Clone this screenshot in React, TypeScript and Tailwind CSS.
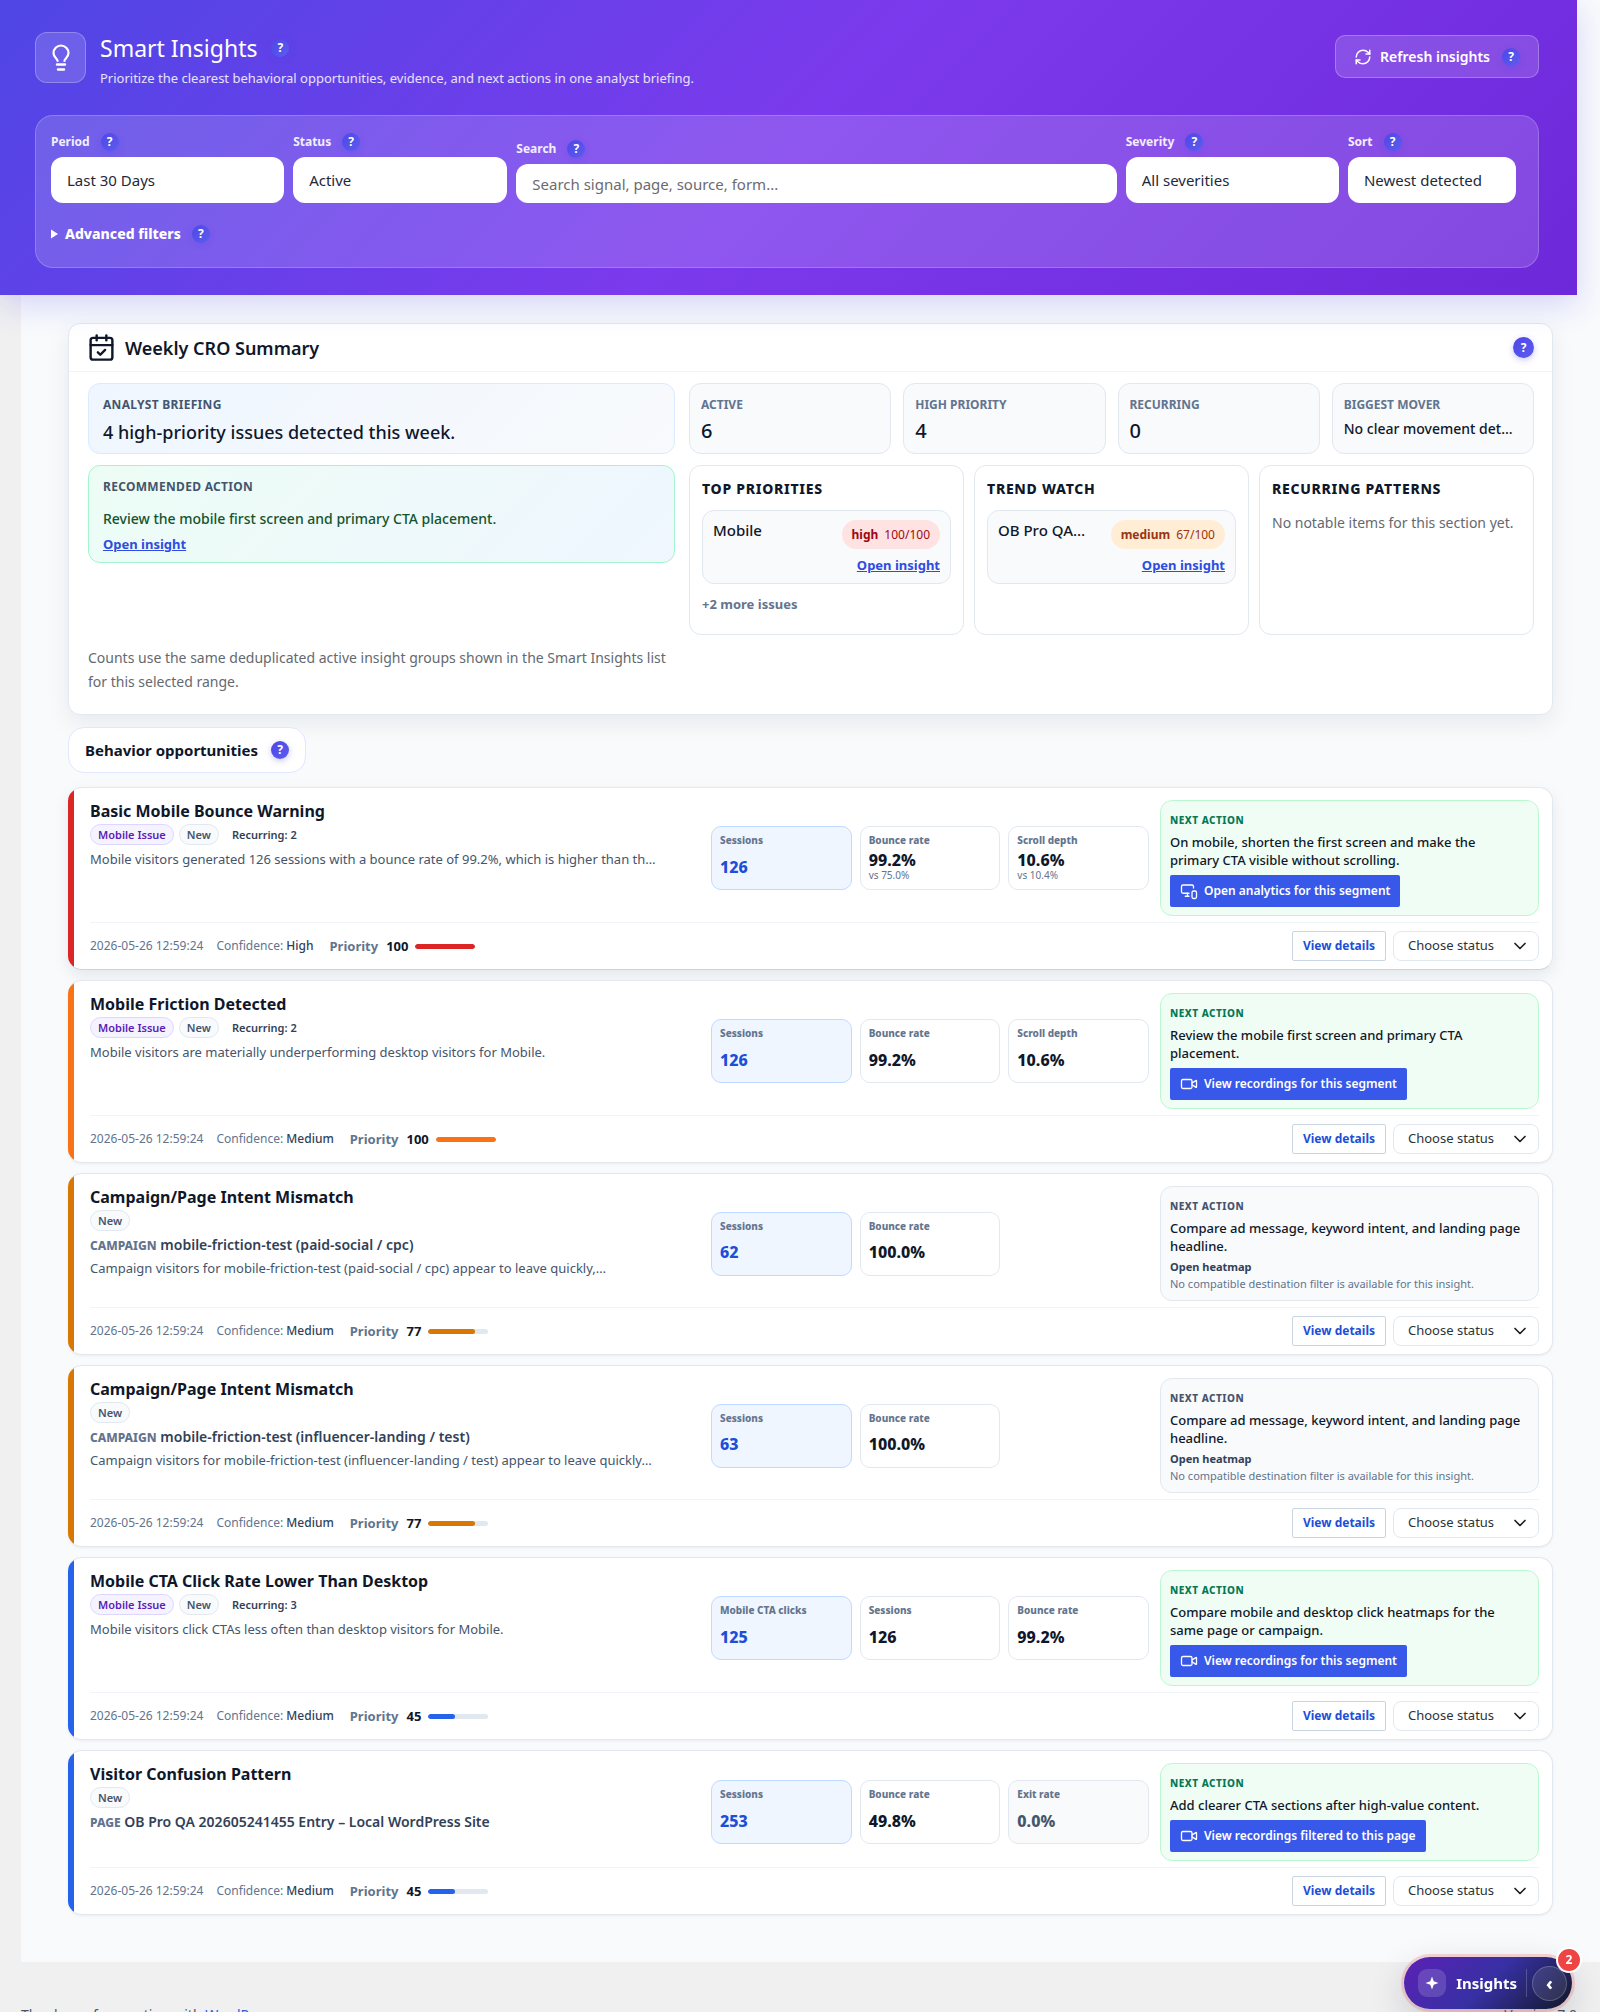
import React from 'react';
import { CalendarCheck, ChevronDown, MonitorSmartphone, RefreshCw, Video } from 'lucide-react';

interface Metric {
  label: string;
  value: string;
  note?: string;
  muted?: boolean;
}

interface Insight {
  title: string;
  mobile?: boolean;
  recurring?: number;
  scope?: [string, string];
  description?: string;
  metrics: Metric[];
  action: string;
  button?: string;
  analytics?: boolean;
  confidence: string;
  priority: number;
  color: string;
}

const insights: Insight[] = [
  {
    title: 'Basic Mobile Bounce Warning',
    mobile: true,
    recurring: 2,
    description: 'Mobile visitors generated 126 sessions with a bounce rate of 99.2%, which is higher than th…',
    metrics: [
      { label: 'Sessions', value: '126' },
      { label: 'Bounce rate', value: '99.2%', note: 'vs 75.0%' },
      { label: 'Scroll depth', value: '10.6%', note: 'vs 10.4%' },
    ],
    action: 'On mobile, shorten the first screen and make the primary CTA visible without scrolling.',
    button: 'Open analytics for this segment',
    analytics: true,
    confidence: 'High',
    priority: 100,
    color: 'bg-[#dc2626]',
  },
  {
    title: 'Mobile Friction Detected',
    mobile: true,
    recurring: 2,
    description: 'Mobile visitors are materially underperforming desktop visitors for Mobile.',
    metrics: [
      { label: 'Sessions', value: '126' },
      { label: 'Bounce rate', value: '99.2%' },
      { label: 'Scroll depth', value: '10.6%' },
    ],
    action: 'Review the mobile first screen and primary CTA placement.',
    button: 'View recordings for this segment',
    confidence: 'Medium',
    priority: 100,
    color: 'bg-[#f97316]',
  },
  {
    title: 'Campaign/Page Intent Mismatch',
    scope: ['CAMPAIGN', 'mobile-friction-test (paid-social / cpc)'],
    description: 'Campaign visitors for mobile-friction-test (paid-social / cpc) appear to leave quickly,…',
    metrics: [
      { label: 'Sessions', value: '62' },
      { label: 'Bounce rate', value: '100.0%' },
    ],
    action: 'Compare ad message, keyword intent, and landing page headline.',
    confidence: 'Medium',
    priority: 77,
    color: 'bg-[#d97706]',
  },
  {
    title: 'Campaign/Page Intent Mismatch',
    scope: ['CAMPAIGN', 'mobile-friction-test (influencer-landing / test)'],
    description: 'Campaign visitors for mobile-friction-test (influencer-landing / test) appear to leave quickly…',
    metrics: [
      { label: 'Sessions', value: '63' },
      { label: 'Bounce rate', value: '100.0%' },
    ],
    action: 'Compare ad message, keyword intent, and landing page headline.',
    confidence: 'Medium',
    priority: 77,
    color: 'bg-[#d97706]',
  },
  {
    title: 'Mobile CTA Click Rate Lower Than Desktop',
    mobile: true,
    recurring: 3,
    description: 'Mobile visitors click CTAs less often than desktop visitors for Mobile.',
    metrics: [
      { label: 'Mobile CTA clicks', value: '125' },
      { label: 'Sessions', value: '126' },
      { label: 'Bounce rate', value: '99.2%' },
    ],
    action: 'Compare mobile and desktop click heatmaps for the same page or campaign.',
    button: 'View recordings for this segment',
    confidence: 'Medium',
    priority: 45,
    color: 'bg-[#2563eb]',
  },
  {
    title: 'Visitor Confusion Pattern',
    scope: ['PAGE', 'OB Pro QA 202605241455 Entry – Local WordPress Site'],
    metrics: [
      { label: 'Sessions', value: '253' },
      { label: 'Bounce rate', value: '49.8%' },
      { label: 'Exit rate', value: '0.0%', muted: true },
    ],
    action: 'Add clearer CTA sections after high-value content.',
    button: 'View recordings filtered to this page',
    confidence: 'Medium',
    priority: 45,
    color: 'bg-[#2563eb]',
  },
];

const Help = ({ large = false }: { large?: boolean }) => (
  <span
    className={`inline-flex shrink-0 items-center justify-center rounded-full bg-linear-to-br from-[#4f46e5] to-[#5b5cf0] text-xs font-bold text-white shadow-[0_2px_6px_rgba(79,70,229,0.3)] ${
      large ? 'size-[21px]' : 'size-[18px]'
    }`}
  >
    ?
  </span>
);

const BulbIcon = () => (
  <svg width="28" height="28" viewBox="0 0 28 28" fill="none" stroke="white" strokeWidth="2.2" strokeLinecap="round">
    <path d="M10.6 17c0-2.600-4.100-3.500-4.100-8a7.500 7.500 0 0 1 15 0c0 4.500-4.100 5.400-4.100 8" />
    <path d="M10 20.500h8M11 25.500h6" strokeWidth="2.400" />
  </svg>
);

const FilterSelect = ({ id, label, value }: { id: string; label: string; value: string }) => (
  <div className="min-w-0">
    <div className="mb-1.5 flex items-center gap-[11px]">
      <label htmlFor={id} className="text-xs/[18px] font-bold text-white/90">{label}</label>
      <Help />
    </div>
    <select id={id} className="block h-[46px] w-full appearance-none rounded-xl bg-white px-4 text-[15px] text-[#1e293b]">
      <option>{value}</option>
    </select>
  </div>
);

const Header = () => (
  <header className="relative z-10 bg-linear-[135deg,#4f46e5_0%,#7c3aed_50%,#6d28d9_100%] pt-8 pr-[38px] pb-[27px] pl-[35px] shadow-[0_10px_30px_rgba(79,70,229,0.2)]">
    <div className="flex h-[58px] items-start justify-between">
      <div className="flex gap-3.5">
        <div className="flex size-[51px] items-center justify-center rounded-xl border border-white/25 bg-white/15">
          <BulbIcon />
        </div>
        <div>
          <div className="flex items-center gap-3.5">
            <h1 className="text-[23px]/[32px] text-white">Smart Insights</h1>
            <Help />
          </div>
          <p className="mt-1 text-[13px]/[20px] text-white/85">
            Prioritize the clearest behavioral opportunities, evidence, and next actions in one analyst briefing.
          </p>
        </div>
      </div>
      <button className="mt-[3px] flex h-[43px] items-center rounded-[10px] border border-white/25 bg-white/15 px-[18px] text-sm font-semibold text-white">
        <RefreshCw size={18} className="mr-2" />
        <span className="mr-3">Refresh insights</span>
        <Help />
      </button>
    </div>

    <form className="mt-[25px] rounded-[18px] border border-white/20 bg-white/15 pt-[17px] pr-[22px] pb-[24px] pl-[15px]">
      <div className="grid grid-cols-[233fr_214fr_600fr_213fr_168fr] items-end gap-[9px]">
        <FilterSelect id="period" label="Period" value="Last 30 Days" />
        <FilterSelect id="status" label="Status" value="Active" />
        <div className="min-w-0">
          <div className="mb-1.5 flex items-center gap-[11px]">
            <label htmlFor="search" className="text-xs/[18px] font-bold text-white/90">Search</label>
            <Help />
          </div>
          <input
            id="search"
            type="text"
            placeholder="Search signal, page, source, form..."
            className="block h-[39px] w-full rounded-xl bg-white px-4 text-[15px] text-[#1e293b] placeholder:text-[#6b6b70]"
          />
        </div>
        <FilterSelect id="severity" label="Severity" value="All severities" />
        <FilterSelect id="sort" label="Sort" value="Newest detected" />
      </div>
      <details className="mt-[22px]">
        <summary className="flex list-none items-center text-sm/[18px] font-extrabold text-white">
          <svg width="7" height="10" viewBox="0 0 7 10" fill="currentColor" className="mr-[7px]">
            <path d="M0 0.500 7 5 0 9.500z" />
          </svg>
          <span className="mr-[11px]">Advanced filters</span>
          <Help />
        </summary>
      </details>
    </form>
  </header>
);

const Stat = ({ label, value, text = false }: { label: string; value: string; text?: boolean }) => (
  <div className="min-w-0 rounded-xl border border-slate-200 bg-slate-50 px-[11px] pt-[13px]">
    <p className="text-xs/[16px] font-bold text-slate-500 uppercase">{label}</p>
    <p className={`truncate font-medium text-[#0f172a] ${text ? 'mt-1.5 text-sm/[20px]' : 'mt-1 text-xl/[28px]'}`}>{value}</p>
  </div>
);

const WatchItem = ({ name, level, score, badge }: { name: string; level: string; score: string; badge: string }) => (
  <div className="mt-[11px] rounded-xl border border-slate-200 bg-slate-50 px-2.5 py-[9px]">
    <div className="flex justify-between">
      <span className="text-[15px]/[20px] font-medium text-[#0f172a]">{name}</span>
      <span className={`flex h-[29px] items-center gap-1.5 rounded-full px-2.5 text-xs ${badge}`}>
        <strong className="font-bold">{level}</strong>
        {score}
      </span>
    </div>
    <div className="mt-[7px] text-right text-[13px]/[18px]">
      <a href="#" className="font-bold text-[#2f4ce0] underline">Open insight</a>
    </div>
  </div>
);

const WatchList = ({ title, children }: { title: string; children: React.ReactNode }) => (
  <div className="min-w-0 rounded-xl border border-slate-200 bg-white px-3 pt-[13px] pb-[21px]">
    <h3 className="text-sm/[20px] font-extrabold tracking-wider whitespace-nowrap text-[#0f172a]">{title}</h3>
    {children}
  </div>
);

const WeeklySummary = () => (
  <section className="rounded-xl border border-slate-200 bg-white shadow-[0_8px_24px_rgba(15,23,42,0.07)]">
    <div className="flex h-12 items-center border-b border-slate-100 px-[18px]">
      <CalendarCheck size={29} className="text-[#0f172a]" />
      <h2 className="ml-[9px] text-lg font-semibold text-[#0f172a]">Weekly CRO Summary</h2>
      <span className="ml-auto flex">
        <Help large />
      </span>
    </div>
    <div className="grid grid-cols-[587fr_845fr] gap-x-3.5 gap-y-[11px] pt-[11px] pr-[18px] pb-5 pl-[19px]">
      <div className="rounded-xl border border-blue-100 bg-linear-[135deg,#eff6ff,#f8fafc] px-3.5 pt-[13px] pb-[9px]">
        <p className="text-xs/[16px] font-bold tracking-wide text-slate-600">ANALYST BRIEFING</p>
        <p className="mt-[7px] text-lg/[24px] font-medium text-[#0f172a]">4 high-priority issues detected this week.</p>
      </div>
      <div className="grid grid-cols-4 gap-3">
        <Stat label="Active" value="6" />
        <Stat label="High priority" value="4" />
        <Stat label="Recurring" value="0" />
        <Stat label="Biggest mover" value="No clear movement det…" text />
      </div>
      <div className="self-start rounded-xl border border-emerald-200 bg-linear-[135deg,#ecfdf5,#eff6ff] px-3.5 pt-[13px] pb-[9px]">
        <p className="text-xs/[16px] font-bold tracking-wide text-slate-600">RECOMMENDED ACTION</p>
        <p className="mt-3.5 text-sm/[20px] font-medium text-[#14532d]">Review the mobile first screen and primary CTA placement.</p>
        <p className="mt-1.5 text-[13px]/[18px]">
          <a href="#" className="font-bold text-[#2f4ce0] underline">Open insight</a>
        </p>
      </div>
      <div className="grid grid-cols-3 gap-2.5">
        <WatchList title="TOP PRIORITIES">
          <WatchItem name="Mobile" level="high" score="100/100" badge="bg-red-100 text-red-800" />
          <p className="mt-[11px] text-[13px]/[18px] font-bold text-slate-500">+2 more issues</p>
        </WatchList>
        <WatchList title="TREND WATCH">
          <WatchItem name="OB Pro QA…" level="medium" score="67/100" badge="bg-[#ffedd5] text-[#9a3412]" />
        </WatchList>
        <WatchList title="RECURRING PATTERNS">
          <p className="mt-3.5 text-sm/[20px] whitespace-nowrap text-[#646970]">No notable items for this section yet.</p>
        </WatchList>
      </div>
      <p className="text-sm/[24px] text-[#646970]">
        Counts use the same deduplicated active insight groups shown in the Smart Insights list for this selected range.
      </p>
    </div>
  </section>
);

const MetricBox = ({ metric, primary }: { metric: Metric; primary: boolean }) => {
  const box = primary
    ? 'border-blue-200 bg-[#eff6ff]'
    : metric.muted
      ? 'border-slate-200 bg-slate-50'
      : 'border-slate-200 bg-white';
  const value = primary ? 'text-[#1d4ed8]' : metric.muted ? 'text-slate-600' : 'text-[#0f172a]';

  return (
    <div className={`flex h-16 flex-col rounded-[10px] border px-2 pt-1.5 pb-[3px] ${box}`}>
      <span className="text-[10px]/[14px] font-extrabold whitespace-nowrap text-slate-500">{metric.label}</span>
      <span className="flex flex-1 flex-col justify-center">
        <strong className={`text-base/[18px] font-extrabold ${value}`}>{metric.value}</strong>
        {metric.note && <span className="text-[10px]/[13px] text-slate-500">{metric.note}</span>}
      </span>
    </div>
  );
};

const InsightCard = ({ insight, index }: { insight: Insight; index: number }) => {
  const ButtonIcon = insight.analytics ? MonitorSmartphone : Video;

  return (
    <article
      className={`flex overflow-hidden rounded-[14px] border border-l-0 bg-white ${
        index === 0
          ? 'border-slate-200 border-b-slate-300 shadow-[0_6px_16px_rgba(15,23,42,0.08)]'
          : 'border-slate-200 shadow-[0_1px_3px_rgba(15,23,42,0.06)]'
      }`}
    >
      <div className={`w-[6px] shrink-0 ${insight.color}`}></div>
      <div className="min-w-0 flex-1 pt-3 pr-[13px] pb-2 pl-4">
        <div className="grid grid-cols-[610fr_438fr_379fr] gap-[11px]">
          <div className="min-w-0">
            <h3 className="text-base/[22px] font-bold text-[#0f172a]">{insight.title}</h3>
            <div className="mt-0.5 flex h-[21px] items-center gap-[5px] text-[11px]/[19px] font-semibold">
              {insight.mobile && (
                <span className="rounded-full border border-violet-200 bg-violet-50 px-[7px] text-[#5b21b6]">Mobile Issue</span>
              )}
              <span className="rounded-full border border-slate-200 bg-slate-50 px-[7px] text-slate-600">New</span>
              {insight.recurring && <span className="ml-2 text-slate-700">Recurring: {insight.recurring}</span>}
            </div>
            <div className="mt-1 flex flex-col gap-0.5">
              {insight.scope && (
                <p className="text-sm/[20px] font-semibold text-slate-700">
                  <span className="text-xs/[20px] font-extrabold text-slate-500">{insight.scope[0]}</span> {insight.scope[1]}
                </p>
              )}
              {insight.description && <p className="truncate text-[13px]/[20px] text-slate-600">{insight.description}</p>}
            </div>
          </div>

          <div className="grid grid-cols-3 items-center gap-2">
            {insight.metrics.map((metric, i) => (
              <MetricBox key={metric.label} metric={metric} primary={i === 0} />
            ))}
          </div>

          <div
            className={`rounded-xl border px-[9px] pt-3 pb-2 ${
              insight.button ? 'border-[#bbf7d0] bg-[#f0fdf4]' : 'border-slate-200 bg-slate-50'
            }`}
          >
            <p className={`text-[10px]/[14px] font-extrabold tracking-wider ${insight.button ? 'text-[#047857]' : 'text-slate-600'}`}>
              NEXT ACTION
            </p>
            <p className="mt-1.5 pr-1.5 text-[13px]/[18px] font-medium text-[#0f172a]">{insight.action}</p>
            {insight.button ? (
              <button className="mt-1.5 flex h-8 items-center gap-1.5 rounded-[2px] bg-[#3858e9] px-2.5 text-xs font-semibold text-white">
                <ButtonIcon size={18} strokeWidth={1.75} />
                {insight.button}
              </button>
            ) : (
              <div className="mt-[3px] text-[11px]/[17px] whitespace-nowrap text-slate-500">
                <p className="font-bold text-slate-700">Open heatmap</p>
                <p>No compatible destination filter is available for this insight.</p>
              </div>
            )}
          </div>
        </div>

        <div className="mt-1.5 flex items-center border-t border-slate-100 pt-2">
          <span className="text-xs/[16px] text-slate-500">2026-05-26 12:59:24</span>
          <span className="ml-[13px] text-xs/[16px] text-slate-500">
            Confidence: <span className="font-medium text-slate-700">{insight.confidence}</span>
          </span>
          <span className="ml-4 text-[13px]/[18px] font-bold text-slate-500">Priority</span>
          <strong className="ml-2 text-[13px]/[18px] font-bold text-[#0f172a]">{insight.priority}</strong>
          <span className="ml-[7px] h-[5px] w-[60px] overflow-hidden rounded-full bg-slate-200">
            <span className={`block h-full rounded-full ${insight.color}`} style={{ width: `${insight.priority}%` }}></span>
          </span>
          <button className="ml-auto h-[30px] rounded-[2px] border border-slate-300 bg-white px-2.5 text-xs font-bold text-[#1d4ed8]">
            View details
          </button>
          <div className="relative ml-[7px]">
            <select
              aria-label={`Status for ${insight.title}`}
              className="block h-[30px] w-[146px] appearance-none rounded-lg border border-slate-200 bg-white pl-3.5 text-[13px] text-[#2c3338]"
            >
              <option>Choose status</option>
            </select>
            <ChevronDown size={20} className="pointer-events-none absolute top-[5px] right-[9px] text-[#1e1e1e]" />
          </div>
        </div>
      </div>
    </article>
  );
};

const InsightsLauncher = () => (
  <div className="fixed right-7 bottom-[3px] z-20 flex h-[52px] items-center rounded-full bg-linear-[135deg,#5b21b6_0%,#3730a3_50%,#111827_100%] pr-[5px] pl-3.5 shadow-[0_0_0_3px_rgba(239,68,68,0.2),0_12px_36px_rgba(15,23,42,0.18)]">
    <button className="flex items-center text-[15px] font-bold text-white">
      <span className="mr-2.5 flex size-7 items-center justify-center rounded-[9px] bg-white/15">
        <svg width="14" height="14" viewBox="0 0 14 14" fill="white">
          <path d="M7 0.500 8.700 5.300 13.500 7 8.700 8.700 7 13.500 5.300 8.700 0.500 7 5.300 5.300z" />
        </svg>
      </span>
      Insights
    </button>
    <span className="ml-[9px] h-7 w-px bg-white/20"></span>
    <button aria-label="Collapse" className="ml-[5px] flex size-[35px] items-center justify-center rounded-full border border-white/20 bg-white/10">
      <span className="text-lg/[18px] font-extrabold text-white">‹</span>
    </button>
    <span className="absolute -top-2.5 -right-2.5 flex size-[26px] items-center justify-center rounded-full border-2 border-white bg-[#ef4444] text-xs font-bold text-white">
      2
    </span>
  </div>
);

const App: React.FC = () => {
  return (
    <div className="min-h-screen bg-[#f0f0f1] font-['Noto_Sans','Open_Sans',sans-serif]">
      <div className="bg-slate-50 pr-[23px]">
        <Header />
      </div>
      <main className="ml-[21px] bg-slate-50 px-[47px] pt-7 pb-[47px]">
        <WeeklySummary />
        <div className="mt-3 mb-3.5 flex h-[46px] w-fit items-center gap-[13px] rounded-2xl border border-indigo-100 bg-white px-4">
          <h2 className="text-[15px] font-bold text-[#0f172a]">Behavior opportunities</h2>
          <Help />
        </div>
        <div className="flex flex-col gap-2.5">
          {insights.map((insight, index) => (
            <InsightCard key={index} insight={insight} index={index} />
          ))}
        </div>
      </main>
      <footer className="mr-[23px] ml-[21px] flex justify-between pt-[43px] text-sm/[20px] text-[#50575e]">
        <p>
          Thank you for creating with <a href="#" className="text-[#3858e9] underline">WordPress</a>.
        </p>
        <p>Version 7.0</p>
      </footer>
      <InsightsLauncher />
    </div>
  );
};

export default App;
